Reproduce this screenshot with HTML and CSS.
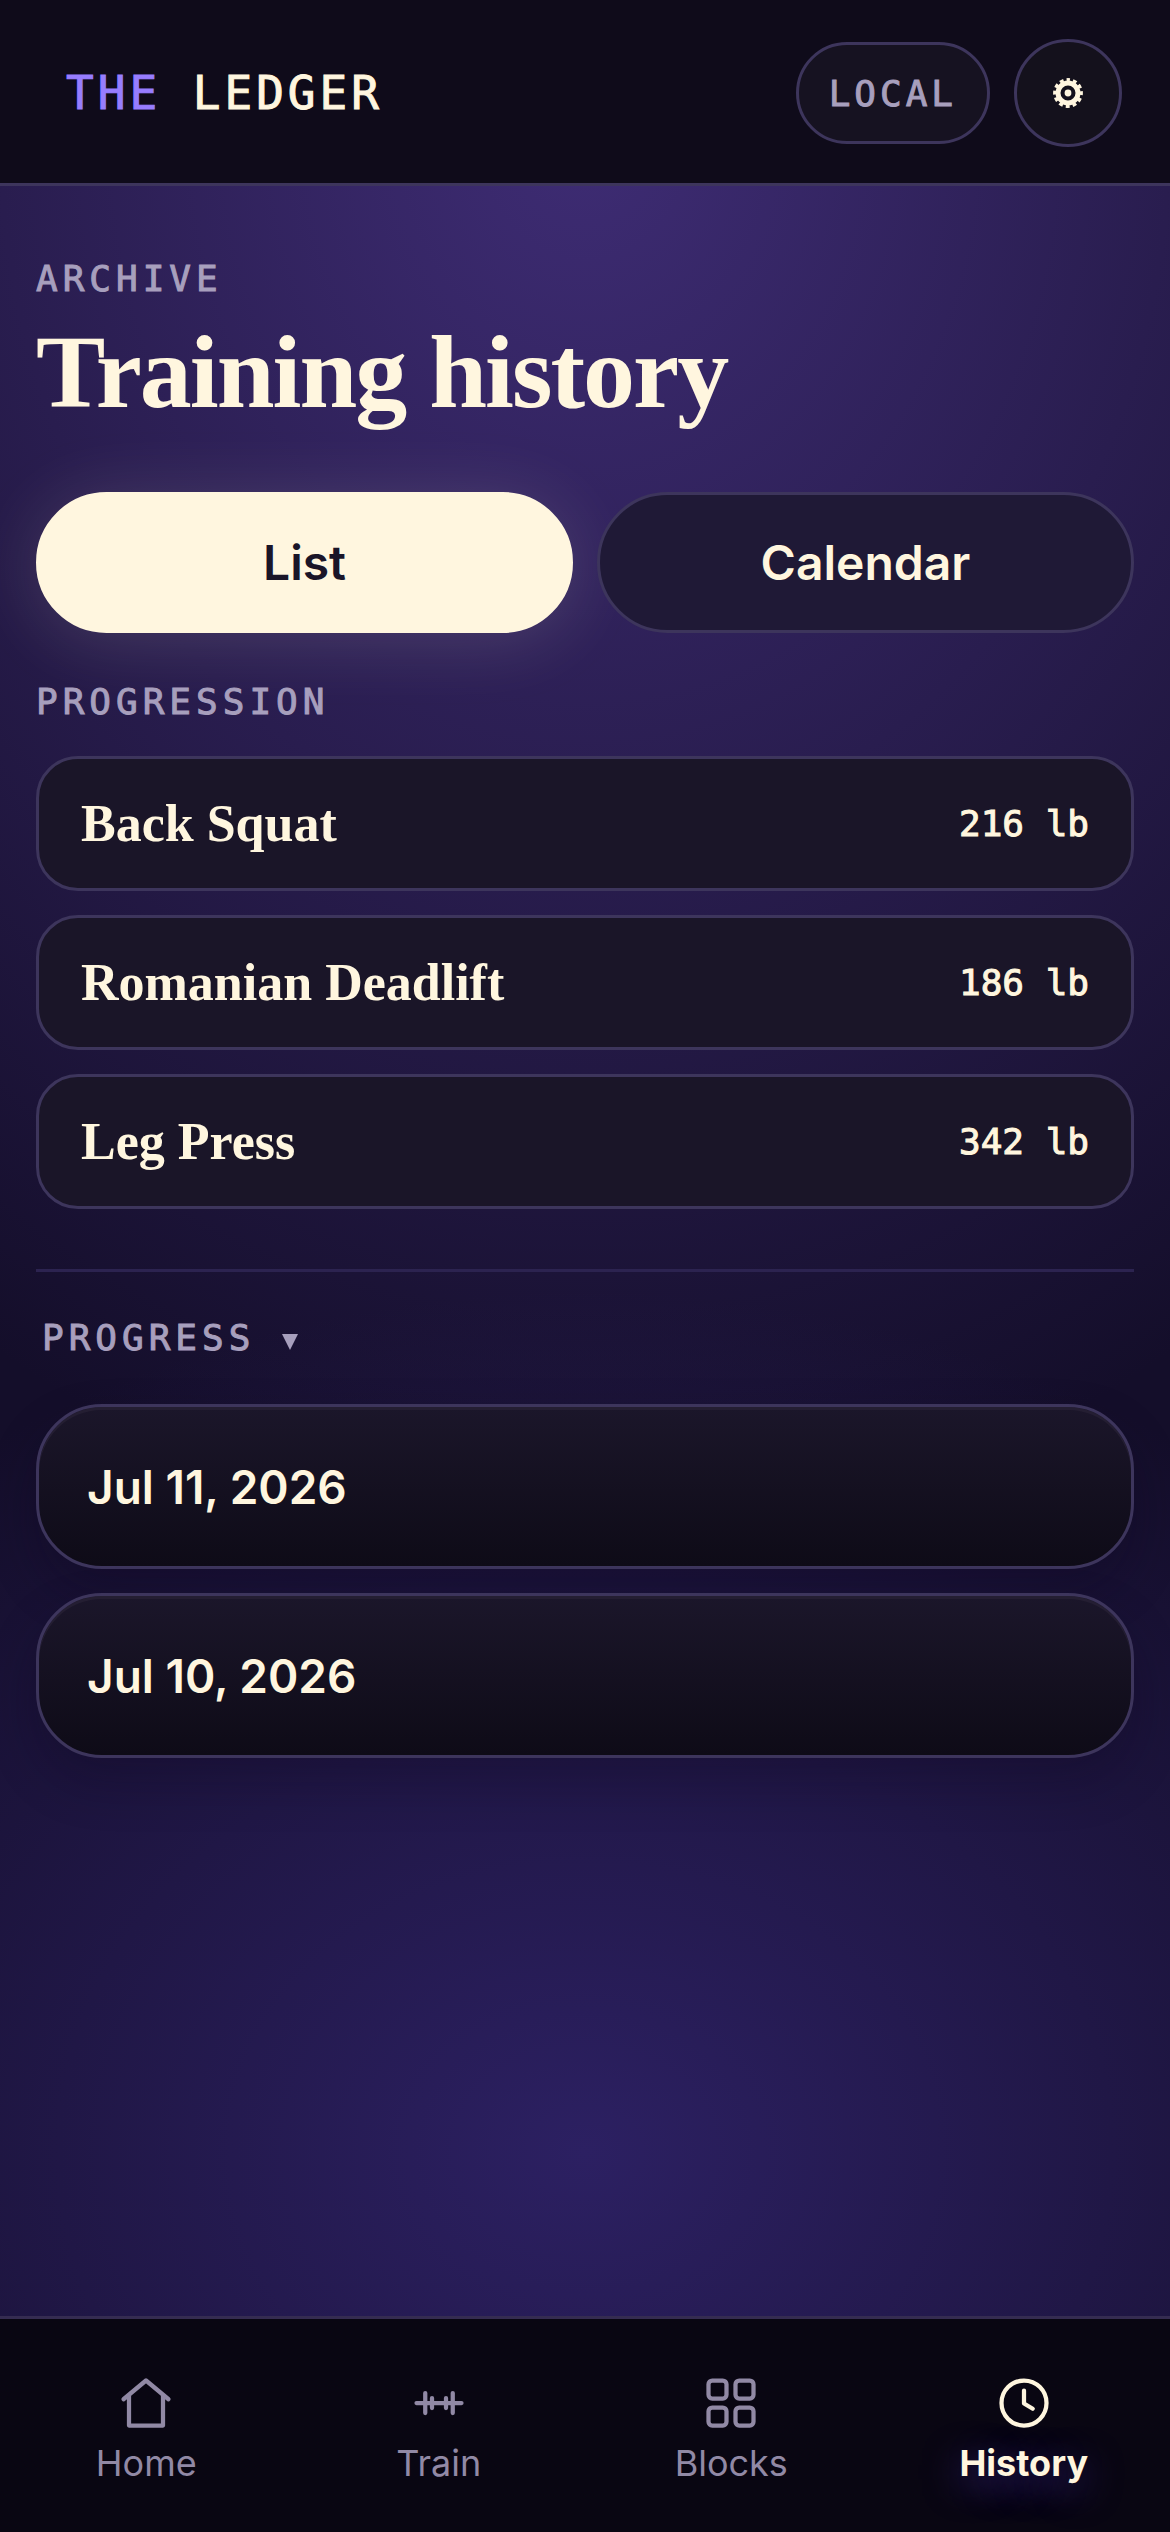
FILE: index.html
```html
<!DOCTYPE html>
<html lang="en">
<head>
    <meta charset="UTF-8">
    <meta name="viewport" content="width=device-width, initial-scale=1.0">
    <title>The Ledger - Training history</title>
    <link rel="stylesheet" href="styles.css">
</head>
<body>
<header class="topbar">
    <a class="brand" href="#"><span class="brand-accent">THE</span> LEDGER</a>
    <div class="topbar-actions">
        <button type="button" class="pill">LOCAL</button>
        <button type="button" class="icon-button" aria-label="Settings">
            <svg class="gear" viewBox="0 0 30 30" aria-hidden="true">
                <circle cx="15" cy="15" r="10" fill="none" stroke="currentColor" stroke-width="5"/>
                <circle cx="15" cy="15" r="13.2" fill="none" stroke="currentColor" stroke-width="3.4" stroke-dasharray="3.9 3.011" stroke-dashoffset="1.95" transform="rotate(-90 15 15)"/>
                <circle cx="15" cy="15" r="3.4" fill="currentColor"/>
            </svg>
        </button>
    </div>
</header>
<main class="content">
    <p class="eyebrow">ARCHIVE</p>
    <h1>Training history</h1>
    <div class="tabs">
        <button type="button" class="tab active" aria-pressed="true">List</button>
        <button type="button" class="tab" aria-pressed="false">Calendar</button>
    </div>
    <section class="progression">
        <h2 class="eyebrow">PROGRESSION</h2>
        <a class="lift" href="#"><span class="lift-name">Back Squat</span><span class="lift-value">216 lb</span></a>
        <a class="lift" href="#"><span class="lift-name">Romanian Deadlift</span><span class="lift-value">186 lb</span></a>
        <a class="lift" href="#"><span class="lift-name">Leg Press</span><span class="lift-value">342 lb</span></a>
    </section>
    <section class="sessions">
        <button type="button" class="eyebrow toggle" aria-expanded="false">PROGRESS <svg class="caret" viewBox="0 0 16 16" aria-hidden="true"><path d="M0 0h16L8 16z" fill="currentColor"/></svg></button>
        <button type="button" class="session">Jul 11, 2026</button>
        <button type="button" class="session">Jul 10, 2026</button>
    </section>
</main>
<nav class="tabbar">
    <a href="#">
        <svg viewBox="0 0 24 24" aria-hidden="true"><path d="M3 10.5 12 3l9 7.5"/><path d="M5.2 9v12h13.6V9"/></svg>
        Home
    </a>
    <a href="#">
        <svg viewBox="0 0 24 24" aria-hidden="true"><path d="M3 12h18M6.5 8v8M17.5 8v8M9.2 10v4M14.8 10v4"/></svg>
        Train
    </a>
    <a href="#">
        <svg viewBox="0 0 24 24" aria-hidden="true"><rect x="3" y="3" width="7.2" height="7.2" rx="1.5"/><rect x="13.8" y="3" width="7.2" height="7.2" rx="1.5"/><rect x="3" y="13.8" width="7.2" height="7.2" rx="1.5"/><rect x="13.8" y="13.8" width="7.2" height="7.2" rx="1.5"/></svg>
        Blocks
    </a>
    <a href="#" class="current" aria-current="page">
        <svg viewBox="0 0 24 24" aria-hidden="true"><circle cx="12" cy="12" r="9"/><path d="M12 7v5.2l3.5 2.1"/></svg>
        History
    </a>
</nav>
</body>
</html>
```
FILE: styles.css
```css
:root {
    --cream: #fff6df;
    --muted: #a79fbd;
    --accent: #977dff;
    --line: #3d355c;
    --card: #1a1528;
    --bar: #0f0b1a;
    --sans: Inter, "Open Sans", sans-serif;
    --serif: "Liberation Serif", serif;
    --mono: "DejaVu Sans Mono", "Liberation Mono", monospace;
}
* {
    box-sizing: border-box;
}
body {
    display: flex;
    flex-direction: column;
    min-height: 100vh;
    margin: 0;
    font-family: var(--sans);
    color: var(--cream);
    background:
        radial-gradient(ellipse 100% 56% at 50% 5%, #3e2c74 0%, rgba(62, 44, 116, 0) 100%),
        radial-gradient(ellipse 90% 34% at 50% 85%, #2c2062 0%, rgba(44, 32, 98, 0) 100%),
        #140e2a;
}
a {
    color: inherit;
    text-decoration: none;
}
button {
    font: inherit;
    color: inherit;
    cursor: pointer;
}
h1, h2, p {
    margin: 0;
}

/* Header */
.topbar {
    display: flex;
    justify-content: space-between;
    align-items: center;
    padding: 39px 48px 36px 66px;
    background-color: var(--bar);
    border-bottom: 3px solid var(--line);
}
.brand {
    font-family: var(--mono);
    font-size: 46px;
    letter-spacing: 4px;
}
.brand-accent {
    color: var(--accent);
}
.topbar-actions {
    display: flex;
    align-items: center;
    gap: 24px;
}
.pill {
    height: 102px;
    padding: 0 30px;
    border: 3px solid var(--line);
    border-radius: 51px;
    background-color: #161221;
    color: var(--muted);
    font-family: var(--mono);
    font-size: 36px;
    letter-spacing: 4px;
}
.icon-button {
    display: flex;
    align-items: center;
    justify-content: center;
    width: 108px;
    height: 108px;
    padding: 0;
    border: 3px solid var(--line);
    border-radius: 50%;
    background-color: #14111c;
}
.gear {
    width: 30px;
    height: 30px;
}

/* Medium weight for the mono labels */
.brand, .pill, .eyebrow, .lift-value {
    -webkit-text-stroke: 1px currentColor;
}

/* Page */
.content {
    flex: 1;
    padding: 72px 36px;
}
.eyebrow {
    font-family: var(--mono);
    font-size: 36px;
    font-weight: normal;
    line-height: 42px;
    letter-spacing: 5px;
    color: var(--muted);
}
h1 {
    margin-top: 12px;
    font-family: var(--serif);
    font-size: 104px;
    line-height: 120px;
    letter-spacing: -2px;
}
.tabs {
    display: grid;
    grid-template-columns: 1fr 1fr;
    gap: 24px;
    margin: 60px 0 48px;
}
.tab {
    height: 141px;
    border: 3px solid var(--line);
    border-radius: 71px;
    background-color: #1f1936;
    font-size: 48px;
    font-weight: 600;
}
.tab.active {
    border-color: var(--cream);
    background-color: var(--cream);
    color: #1a1528;
    box-shadow: 0 6px 72px rgba(255, 246, 223, 0.14);
}
.progression {
    display: flex;
    flex-direction: column;
    gap: 24px;
    padding-bottom: 60px;
    border-bottom: 3px solid #2c2350;
}
.progression .eyebrow {
    margin-bottom: 9px;
}
.lift {
    display: flex;
    justify-content: space-between;
    align-items: center;
    height: 135px;
    padding: 0 42px;
    border: 3px solid var(--line);
    border-radius: 42px;
    background-color: var(--card);
}
.lift-name {
    font-family: var(--serif);
    font-size: 52px;
    font-weight: bold;
}
.lift-value {
    font-family: var(--mono);
    font-size: 36px;
}
.sessions {
    display: flex;
    flex-direction: column;
    gap: 24px;
    padding-top: 30px;
}
.toggle {
    align-self: flex-start;
    height: 72px;
    margin-bottom: 6px;
    padding: 0 6px;
    border: 0;
    background: none;
}
.caret {
    width: 16px;
    height: 16px;
}
.session {
    height: 165px;
    padding: 0 48px;
    border: 3px solid var(--line);
    border-radius: 66px;
    background: linear-gradient(#1b162a, #0e0b17);
    box-shadow: inset 0 3px 0 #241e32, 0 24px 48px rgba(12, 6, 30, 0.3);
    font-size: 46px;
    font-weight: 600;
    text-align: left;
}

/* Bottom navigation */
.tabbar {
    position: sticky;
    bottom: 0;
    display: grid;
    grid-template-columns: repeat(4, 1fr);
    padding: 54px 0 45px;
    border-top: 3px solid #352c51;
    background-color: #090612;
}
.tabbar a {
    display: flex;
    flex-direction: column;
    align-items: center;
    gap: 6px;
    color: #9189a5;
    font-size: 36px;
    line-height: 48px;
}
.tabbar svg {
    width: 60px;
    height: 60px;
    fill: none;
    stroke: currentColor;
    stroke-width: 1.7;
    stroke-linecap: round;
    stroke-linejoin: round;
}
.tabbar .current {
    color: var(--cream);
    font-weight: bold;
    text-shadow: 0 9px 36px rgba(122, 92, 255, 0.5);
}
```
